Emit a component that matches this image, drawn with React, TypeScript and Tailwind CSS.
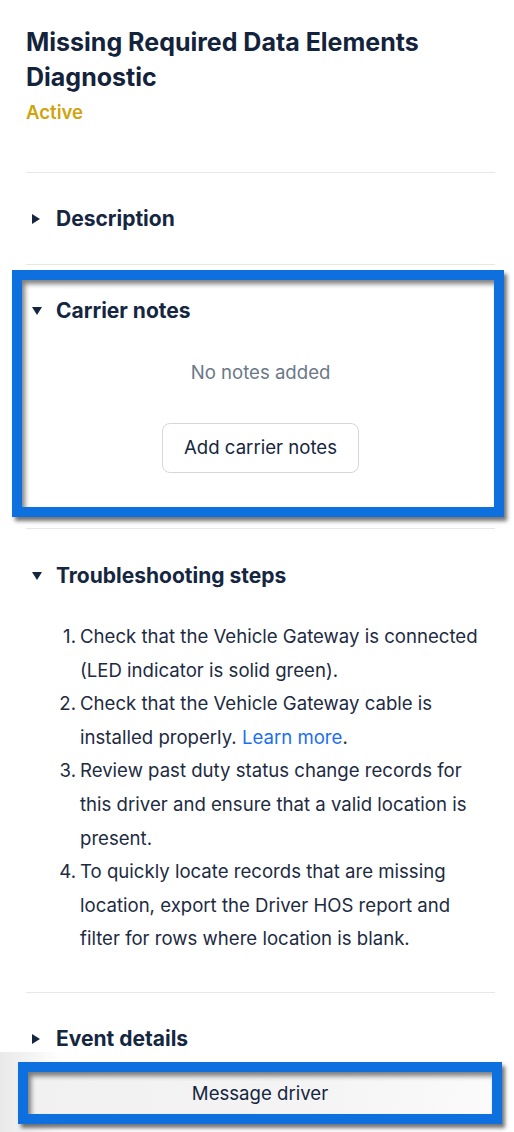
import React from "react";

const Right = () => (
  <svg width="10" height="12" viewBox="0 0 10 12" className="shrink-0">
    <path d="M1 1 L9 6 L1 11 Z" fill="#152641" />
  </svg>
);
const Down = () => (
  <svg width="12" height="10" viewBox="0 0 12 10" className="shrink-0">
    <path d="M1 1 L11 1 L6 9 Z" fill="#152641" />
  </svg>
);

function Header({ open, title }: { open?: boolean; title: string }) {
  return (
    <div className="flex items-center h-[26px]">
      <div className="w-[30px] flex items-center pl-[5px]">{open ? <Down /> : <Right />}</div>
      <div className="text-[21px] font-bold leading-[26px] text-[#152641]">{title}</div>
    </div>
  );
}

const steps: React.ReactNode[] = [
  "Check that the Vehicle Gateway is connected (LED indicator is solid green).",
  <>
    Check that the Vehicle Gateway cable is installed properly.{" "}
    <span className="text-[#1a6ff0]">Learn more</span>.
  </>,
  "Review past duty status change records for this driver and ensure that a valid location is present.",
  "To quickly locate records that are missing location, export the Driver HOS report and filter for rows where location is blank.",
];

export default function App() {
  return (
    <div
      className="w-[514px] h-[1132px] bg-white overflow-hidden flex flex-col"
      style={{ fontFamily: "Inter, 'Noto Sans', sans-serif" }}
    >
      <div className="px-[26px] pr-[19px] pt-[25px]">
        <h1 className="text-[25px] font-bold leading-[35px] text-[#14233c]">
          Missing Required Data Elements Diagnostic
        </h1>
        <div className="mt-[4px] text-[18.6px] font-semibold leading-[26px] text-[#cfa30b]">Active</div>
        <div className="mt-[47px] border-t border-[#e4e7eb]" />
        <div className="pt-[33px] pb-[32px]">
          <Header title="Description" />
        </div>
        <div className="border-t border-[#e4e7eb]" />
        <div className="relative pt-[33px] pb-[55px] flex flex-col">
          <div className="absolute left-[-14px] right-[-9px] top-[5px] bottom-[11px] border-[10px] border-[#0e6fde] shadow-[3px_4px_4px_rgba(0,0,0,0.55),inset_3px_4px_5px_rgba(0,0,0,0.5)] pointer-events-none" />
          <Header open title="Carrier notes" />
          <div className="mt-[35px] text-center text-[18.6px] leading-[26px] text-[#6b7889]">No notes added</div>
          <div className="mt-[38px] flex justify-center">
            <button className="w-[197px] h-[50px] rounded-[8px] border border-[#d3d8de] bg-white text-[18.6px] text-[#152641]">
              Add carrier notes
            </button>
          </div>
        </div>
        <div className="border-t border-[#e4e7eb]" />
        <div className="pt-[34px] pb-[36px]">
          <Header open title="Troubleshooting steps" />
          <ol className="mt-[31px] text-[18.6px] leading-[33.6px] text-[#1d2b42]">
            {steps.map((s, i) => (
              <li key={i} className="flex">
                <span className="w-[54px] shrink-0 text-right pr-[4px]">{i + 1}.</span>
                <span>{s}</span>
              </li>
            ))}
          </ol>
        </div>
        <div className="border-t border-[#e4e7eb]" />
        <div className="pt-[33px]">
          <Header title="Event details" />
        </div>
      </div>
      <div className="mt-auto pt-[10px] px-[18px] pr-[12px] bg-[linear-gradient(to_right,#e9e9e9,#ffffff_12%)] pb-[10px]">
        <button className="w-full h-[62px] border-[10px] border-[#0e6fde] bg-[linear-gradient(100deg,#f1f1f1,#f4f4f4_60%,#fbfbfb)] shadow-[3px_4px_4px_rgba(0,0,0,0.55),inset_3px_4px_5px_rgba(0,0,0,0.5)] text-[18.6px] text-[#152641] leading-[26px]">
          Message driver
        </button>
      </div>
    </div>
  );
}
